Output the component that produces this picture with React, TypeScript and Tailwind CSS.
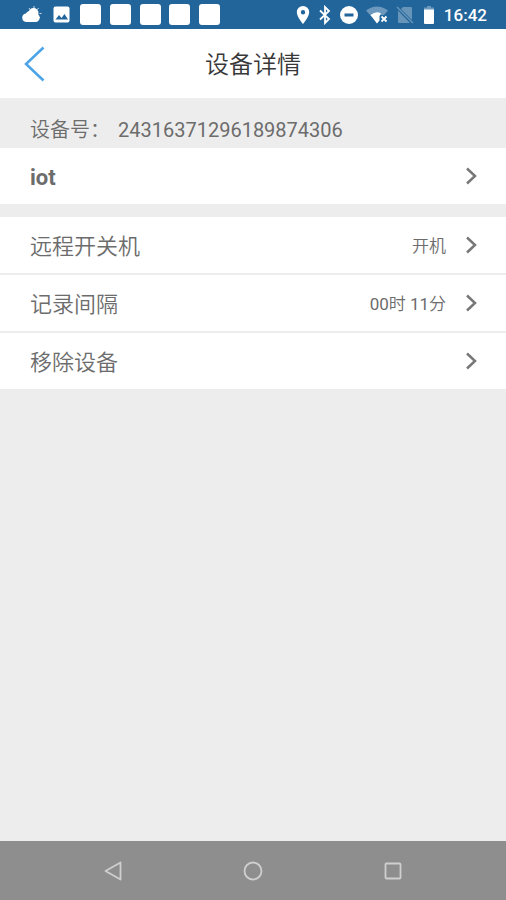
import type { ReactNode } from "react";

function StatusBar() {
  return (
    <div className="flex h-[29px] shrink-0 items-center justify-between bg-[#22659b] pl-[21px] pr-[19px] text-white">
      <div className="flex w-[199px] items-center justify-between">
        <svg width="21" height="21" viewBox="0 0 21 21" aria-hidden="true">
          <circle cx="12.500" cy="9" r="5" fill="currentColor" />
          <path
            d="M13 2v3M8 4l1 1.500M17.500 4l-1 1.500M18.500 9.500h2M17.500 13l1.500 1"
            stroke="currentColor"
            strokeWidth="0.800"
          />
          <path
            d="M5 18a4.300 4.300 0 0 1-.2-8.500A5.500 5.500 0 0 1 14.500 9.600 4.200 4.200 0 0 1 14.500 18z"
            fill="currentColor"
          />
        </svg>
        <svg width="21" height="21" viewBox="0 0 21 21" aria-hidden="true">
          <rect x="2.500" y="2.500" width="16" height="16" rx="2" fill="currentColor" />
          <path d="M4.500 15.500l3.500-4.500 2.500 3 3-4 3.500 5.500z" fill="#22659b" />
        </svg>
        {[0, 1, 2, 3, 4].map((n) => (
          <span key={n} className="size-[21px] rounded-[3px] bg-white" />
        ))}
      </div>
      <div className="flex items-center gap-[9px]">
        <svg width="14" height="20" viewBox="0 0 14 20" aria-hidden="true">
          <path
            fillRule="evenodd"
            d="M7 1a6.200 6.200 0 0 0-6.200 6.200C.8 11.800 7 19 7 19s6.200-7.200 6.200-11.800A6.200 6.200 0 0 0 7 1zm0 4a2.200 2.200 0 1 1 0 4.400A2.200 2.200 0 0 1 7 5z"
            fill="currentColor"
          />
        </svg>
        <svg width="12" height="20" viewBox="0 0 12 20" aria-hidden="true">
          <path
            d="M1 5.500l9 8.500-4 4V2l4 4-9 8.500"
            fill="none"
            stroke="currentColor"
            strokeWidth="1.800"
          />
        </svg>
        <svg width="18" height="18" viewBox="0 0 18 18" aria-hidden="true">
          <circle cx="9" cy="9" r="9" fill="currentColor" />
          <rect x="4.500" y="7.500" width="9" height="3" fill="#22659b" />
        </svg>
        <svg
          className="overflow-visible"
          width="20"
          height="18"
          viewBox="0 0 20 18"
          aria-hidden="true"
        >
          <path d="M-1 4.500Q10-3.500 21 4.500L17 9h-5l-2 8z" fill="#6b98bc" />
          <path d="M3.500 9Q9.500 4.500 14 7.500L12.500 10v4.500L10 17.500z" fill="currentColor" />
          <path d="M14.500 10.500l5 5m0-5l-5 5" stroke="currentColor" strokeWidth="1.800" />
        </svg>
        <svg width="18" height="18" viewBox="0 0 18 18" aria-hidden="true">
          <path d="M7 1h8a1 1 0 0 1 1 1v12L5 3z" fill="#6795ba" />
          <path d="M2 4.500L14 17H3a1 1 0 0 1-1-1z" fill="#6795ba" />
          <path d="M1 1l16 16" stroke="#6795ba" strokeWidth="1.500" />
        </svg>
        <svg width="12" height="18" viewBox="0 0 12 18" aria-hidden="true">
          <path d="M4 0h4v1.500h3V5H1V1.500h3z" fill="#6b98bc" />
          <path d="M1 3.500h10V17a1 1 0 0 1-1 1H2a1 1 0 0 1-1-1z" fill="currentColor" />
        </svg>
        <time className="text-[17px] leading-[20px] font-medium">16:42</time>
      </div>
    </div>
  );
}

function Digits({ children }: { children: string }) {
  return <span className="font-normal">{children}</span>;
}

function Row({ label, value }: { label: ReactNode; value?: ReactNode }) {
  return (
    <button
      type="button"
      className="flex h-[56px] w-full items-center bg-white pr-[29px] pl-[30px] text-left"
    >
      <span className="flex-1 pt-[3px] text-[22px] leading-[30px]">{label}</span>
      {value && <span className="mr-[20px] pt-[2px] text-[17px] leading-[24px]">{value}</span>}
      <svg width="11" height="18" viewBox="0 0 11 18" aria-hidden="true">
        <path d="M1 1.500l8 7.500-8 7.500" fill="none" stroke="#777" strokeWidth="2.500" />
      </svg>
    </button>
  );
}

export default function App() {
  return (
    <div className="flex min-h-screen flex-col bg-[#ededed] font-[Roboto,'Noto_Sans_CJK_SC',sans-serif] font-[350] text-[#6c6c6c]">
      <StatusBar />
      <header className="grid h-[69px] shrink-0 grid-cols-[1fr_auto_1fr] items-center bg-white px-[24px]">
        <button type="button" aria-label="返回" className="justify-self-start">
          <svg width="21" height="36" viewBox="0 0 21 36" aria-hidden="true">
            <path d="M19.500 1.500L2 18l17.500 16.500" fill="none" stroke="#4ba3e8" strokeWidth="2.500" />
          </svg>
        </button>
        <h1 className="pt-[3px] text-[24px] leading-[32px] font-[350] text-[#383838]">设备详情</h1>
      </header>
      <main className="flex-1">
        <p className="flex h-[50px] items-center gap-[8px] px-[30px] pt-[14px] text-[20px] leading-[28px]">
          <span>设备号：</span>
          <Digits>24316371296189874306</Digits>
        </p>
        <Row label={<strong className="font-bold">iot</strong>} />
        <div className="mt-[13px] flex flex-col gap-[2px]">
          <Row label="远程开关机" value="开机" />
          <Row
            label="记录间隔"
            value={
              <>
                <Digits>00</Digits>时 <Digits>11</Digits>分
              </>
            }
          />
          <Row label="移除设备" />
        </div>
      </main>
      <nav className="flex h-[59px] shrink-0 items-center justify-center gap-[120px] bg-[#8e8e8e] text-[#cfcfcf]">
        <button type="button" aria-label="后退">
          <svg width="20" height="20" viewBox="0 0 20 20" fill="none" stroke="currentColor" strokeWidth="1.800" aria-hidden="true">
            <path d="M17.500 1.500v17L2.500 10z" strokeLinejoin="round" />
          </svg>
        </button>
        <button type="button" aria-label="主页">
          <svg width="20" height="20" viewBox="0 0 20 20" fill="none" stroke="currentColor" strokeWidth="1.800" aria-hidden="true">
            <circle cx="10" cy="10" r="8.500" />
          </svg>
        </button>
        <button type="button" aria-label="最近任务">
          <svg width="20" height="20" viewBox="0 0 20 20" fill="none" stroke="currentColor" strokeWidth="1.800" aria-hidden="true">
            <rect x="2.500" y="2.500" width="15" height="15" rx="1" />
          </svg>
        </button>
      </nav>
    </div>
  );
}
